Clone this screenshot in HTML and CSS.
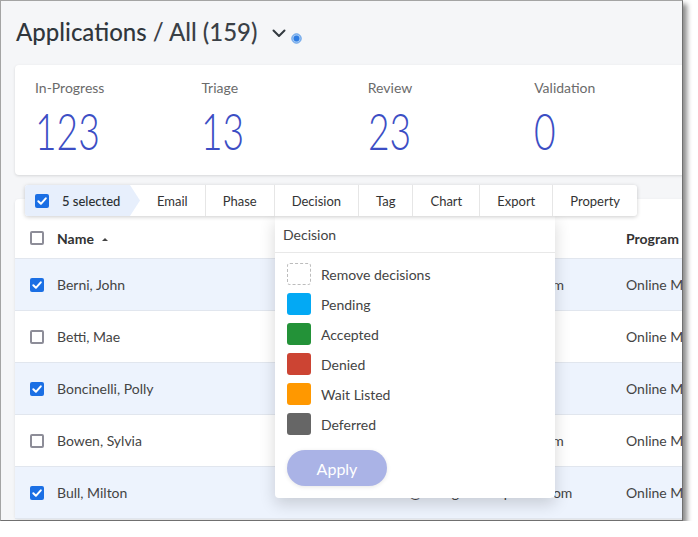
FILE: index.html
```html
<!DOCTYPE html>
<html lang="en">
<head>
<meta charset="utf-8">
<title>Applications</title>
<link rel="stylesheet" href="styles.css">
</head>
<body>
<div class="window">
  <header class="page-head">
    <h1 class="title"><span class="title-main">Applications</span> / All (159)</h1>
    <svg class="chev" width="14" height="9" viewBox="0 0 14 9"><path d="M1.5 1.5 L7 7 L12.5 1.5" fill="none" stroke="#333a40" stroke-width="2" stroke-linecap="round" stroke-linejoin="round"/></svg>
    <svg class="dot" width="11" height="11" viewBox="0 0 11 11"><circle cx="5.5" cy="5.5" r="4.7" fill="#a3c8f3" stroke="#5a9be8" stroke-width="1"/><circle cx="5.5" cy="5.5" r="2.9" fill="#2f7de3"/></svg>
  </header>

  <section class="stats">
    <div class="stat"><div class="stat-label">In-Progress</div><div class="stat-num">123</div></div>
    <div class="stat"><div class="stat-label">Triage</div><div class="stat-num">13</div></div>
    <div class="stat"><div class="stat-label">Review</div><div class="stat-num">23</div></div>
    <div class="stat"><div class="stat-label">Validation</div><div class="stat-num">0</div></div>
  </section>

  <section class="table-card">
    <div class="toolbar">
      <div class="tb-sel">
        <span class="cb on"><svg width="14" height="14" viewBox="0 0 14 14"><path d="M3.3 7.2 L5.9 9.8 L10.8 4.3" fill="none" stroke="#fff" stroke-width="2" stroke-linecap="round" stroke-linejoin="round"/></svg></span>
        <span class="sel-count">5 selected</span>
      </div>
      <div class="tb-item first">Email</div>
      <div class="tb-item">Phase</div>
      <div class="tb-item">Decision</div>
      <div class="tb-item">Tag</div>
      <div class="tb-item">Chart</div>
      <div class="tb-item">Export</div>
      <div class="tb-item">Property</div>
    </div>

    <div class="dropdown">
      <div class="dd-head">Decision</div>
      <ul class="dd-list">
        <li class="dd-item"><span class="sw sw-none"></span>Remove decisions</li>
        <li class="dd-item"><span class="sw sw-pending"></span>Pending</li>
        <li class="dd-item"><span class="sw sw-accepted"></span>Accepted</li>
        <li class="dd-item"><span class="sw sw-denied"></span>Denied</li>
        <li class="dd-item"><span class="sw sw-wait"></span>Wait Listed</li>
        <li class="dd-item"><span class="sw sw-deferred"></span>Deferred</li>
      </ul>
      <button class="apply">Apply</button>
    </div>

    <div class="row head">
      <div class="cb-cell"><span class="cb"></span></div>
      <div class="cell">Name <span class="sort"></span></div>
      <div class="cell">Email</div>
      <div class="cell">Program</div>
    </div>
    <div class="row sel">
      <div class="cb-cell"><span class="cb on"><svg width="14" height="14" viewBox="0 0 14 14"><path d="M3.3 7.2 L5.9 9.8 L10.8 4.3" fill="none" stroke="#fff" stroke-width="2" stroke-linecap="round" stroke-linejoin="round"/></svg></span></div>
      <div class="cell">Berni, John</div>
      <div class="cell">johnberni@smallgreeninspector.com</div>
      <div class="cell">Online Master of Public Health</div>
    </div>
    <div class="row">
      <div class="cb-cell"><span class="cb"></span></div>
      <div class="cell">Betti, Mae</div>
      <div class="cell">maebetti@mail.com</div>
      <div class="cell">Online Master of Public Health</div>
    </div>
    <div class="row sel">
      <div class="cb-cell"><span class="cb on"><svg width="14" height="14" viewBox="0 0 14 14"><path d="M3.3 7.2 L5.9 9.8 L10.8 4.3" fill="none" stroke="#fff" stroke-width="2" stroke-linecap="round" stroke-linejoin="round"/></svg></span></div>
      <div class="cell">Boncinelli, Polly</div>
      <div class="cell">pollyb@mail.com</div>
      <div class="cell">Online Master of Public Health</div>
    </div>
    <div class="row">
      <div class="cb-cell"><span class="cb"></span></div>
      <div class="cell">Bowen, Sylvia</div>
      <div class="cell">sylbowen@smallgreeninspector.com</div>
      <div class="cell">Online Master of Public Health</div>
    </div>
    <div class="row sel">
      <div class="cb-cell"><span class="cb on"><svg width="14" height="14" viewBox="0 0 14 14"><path d="M3.3 7.2 L5.9 9.8 L10.8 4.3" fill="none" stroke="#fff" stroke-width="2" stroke-linecap="round" stroke-linejoin="round"/></svg></span></div>
      <div class="cell">Bull, Milton</div>
      <div class="cell">fuzzahmed@smallgreeninspector.com</div>
      <div class="cell">Online Master of Public Health</div>
    </div>
  </section>
</div>
</body>
</html>
```

FILE: styles.css
```css
* { box-sizing: border-box; }
html, body { margin: 0; background: #fff; }
body { font-family: Lato, "Open Sans", sans-serif; color: #333; }

.window {
  position: relative;
  width: 683px;
  height: 521px;
  border: 1px solid #a4a4a4;
  border-right-color: #707070;
  border-bottom-color: #707070;
  background: #f5f6f8;
  overflow: hidden;
  box-shadow: 4px 4px 5px rgba(0, 0, 0, 0.45);
}

/* header */
.page-head {
  height: 64px;
  padding: 16px 0 0 15px;
  display: flex;
  align-items: flex-start;
}
.title {
  margin: 0;
  font-size: 24px;
  line-height: 30px;
  font-weight: 500;
  color: #3a4046;
}
.title-main { color: #30363c; }
.chev { margin: 12px 0 0 15px; }
.dot { margin: 16px 0 0 5px; }

/* stats */
.stats {
  margin-left: 14px;
  width: 760px;
  height: 110px;
  background: #fff;
  border-radius: 4px;
  box-shadow: 0 1px 3px rgba(0, 0, 0, 0.13);
  display: flex;
  padding-top: 14px;
}
.stat { width: 166.4px; padding-left: 20px; }
.stat-label { font-size: 14px; line-height: 17px; color: #6b6b6b; }
.stat-num {
  margin-top: 9px;
  font-size: 51px;
  line-height: 52px;
  font-weight: 300;
  color: #3c4ec4;
  transform: scaleX(0.73);
  transform-origin: left center;
}

/* table */
.table-card {
  position: relative;
  margin: 24px 0 0 14px;
  width: 760px;
  padding-top: 19px;
  background: #fff;
  border-radius: 4px;
  box-shadow: 0 1px 3px rgba(0, 0, 0, 0.1);
}

.toolbar {
  position: absolute;
  left: 10px;
  top: -14px;
  height: 31px;
  display: flex;
  background: #fff;
  border-radius: 3px;
  box-shadow: 0 1px 4px rgba(0, 0, 0, 0.2);
  z-index: 3;
  font-size: 13px;
  color: #333;
}
.tb-sel {
  width: 115px;
  display: flex;
  align-items: center;
  gap: 13px;
  padding-left: 10px;
  background: #e7effc;
  clip-path: polygon(0 0, 105px 0, 115px 50%, 105px 100%, 0 100%);
  border-radius: 3px 0 0 3px;
}
.sel-count { color: #2b2f33; font-weight: 500; }
.tb-item {
  display: flex;
  align-items: center;
  padding: 0 17px;
  border-left: 1px solid #e6e6e6;
}
.tb-item.first { border-left: 0; }

.cb {
  display: block;
  width: 14px;
  height: 14px;
  border: 2px solid #8d8d98;
  border-radius: 2px;
  background: #fff;
}
.cb.on { border: 0; background: #1b6fe4; }
.cb svg { display: block; }

.row {
  display: grid;
  grid-template-columns: 42px 285px 284px 1fr;
  align-items: center;
  height: 52px;
  border-bottom: 1px solid #e1e6ee;
  font-size: 14px;
  color: #444;
}
.row.head { height: 41px; font-weight: 700; color: #333; }
.row.sel { background: #edf3fd; }
.cb-cell { padding-left: 15px; }
.cell { white-space: nowrap; overflow: hidden; }
.sort {
  display: inline-block;
  margin-left: 5px;
  vertical-align: middle;
  border-left: 3px solid transparent;
  border-right: 3px solid transparent;
  border-bottom: 3px solid #444;
}

/* dropdown */
.dropdown {
  position: absolute;
  left: 260px;
  top: 17px;
  width: 280px;
  padding-bottom: 12px;
  background: #fff;
  border-radius: 0 0 4px 4px;
  box-shadow: 0 6px 16px rgba(0, 0, 0, 0.16);
  z-index: 2;
}
.dd-head {
  height: 37px;
  display: flex;
  align-items: center;
  padding-left: 8px;
  font-size: 14px;
  color: #444;
  border-bottom: 1px solid #e8e8e8;
}
.dd-list { list-style: none; margin: 0; padding: 6px 0 0 0; }
.dd-item {
  height: 30px;
  display: flex;
  align-items: center;
  gap: 10px;
  padding-left: 12px;
  font-size: 14px;
  color: #444;
}
.sw { width: 24px; height: 22px; border-radius: 3px; }
.sw-none { border: 1px dashed #bcbcbc; }
.sw-pending { background: #03a9f4; }
.sw-accepted { background: #239238; }
.sw-denied { background: #cc4433; }
.sw-wait { background: #ff9800; }
.sw-deferred { background: #666; }
.apply {
  display: block;
  margin: 11px 0 0 12px;
  width: 100px;
  height: 36px;
  border: 0;
  border-radius: 18px;
  background: #aab3e6;
  color: #fff;
  font-family: Lato, "Open Sans", sans-serif;
  font-size: 16px;
  box-shadow: 0 1px 4px rgba(0, 0, 0, 0.1);
}
```
